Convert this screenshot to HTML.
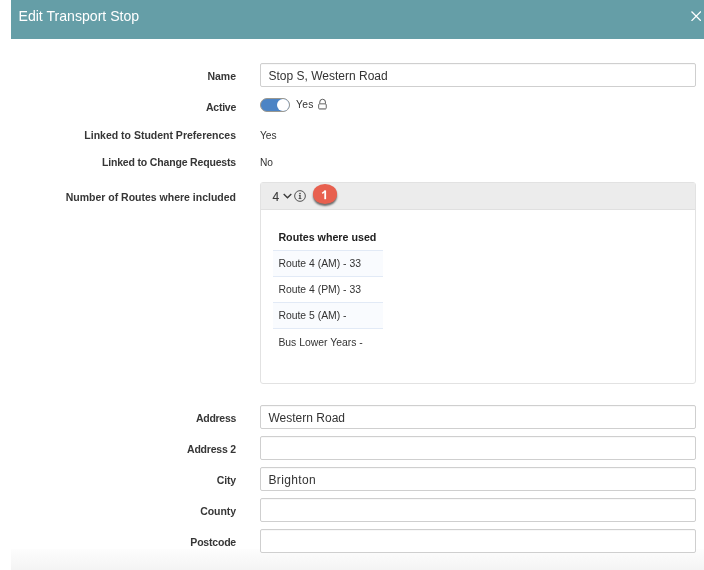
<!DOCTYPE html>
<html><head><meta charset="utf-8">
<style>
*{box-sizing:border-box;margin:0;padding:0}
html,body{width:704px;height:570px;overflow:hidden;background:#fff;font-family:"Liberation Sans",sans-serif;color:#333}
.modal{position:absolute;left:11px;top:0;width:693px;height:570px;background:#fff;will-change:transform}
.hdr{position:absolute;left:0;top:0;width:693px;height:39px;background:#659ea7}
.title{position:absolute;left:7.5px;top:8.2px;font-size:14.1px;color:#fff;line-height:16px}
.close{position:absolute;left:679.6px;top:10.6px;width:10.4px;height:10.4px}
.foot{position:absolute;left:0;top:549px;width:693px;height:21px;background:linear-gradient(#fdfdfd,#f4f4f4)}
.lbl{position:absolute;right:468px;font-size:10.5px;font-weight:bold;color:#363636;white-space:nowrap;line-height:12px}
.val{position:absolute;left:249px;font-size:10.2px;color:#333;white-space:nowrap;line-height:12px}
.inp{position:absolute;left:249px;width:436px;height:24px;border:1px solid #cfcfcf;border-radius:2px;background:#fff;font-size:12px;color:#333;padding-left:7.5px;padding-top:1px;line-height:22px;box-shadow:inset 0 1px 1px rgba(0,0,0,0.03)}
.panel{position:absolute;left:249px;top:182px;width:436px;height:202px;border:1px solid #e2e2e2;border-radius:3px;background:#fff}
.ph{position:absolute;left:0;top:0;width:434px;height:27px;background:#ececec;border-bottom:1px solid #e0e0e0}
table{position:absolute;left:12px;top:44px;border-collapse:collapse;font-size:10.2px;color:#333}
.tog{position:absolute;left:249px;top:98px;width:30px;height:14px;border-radius:7px;background:#4c84c5;border:1px solid #9a9890}
.knob{position:absolute;right:0px;top:0px;width:12px;height:12px;border-radius:50%;background:#fff}
.lock{position:absolute;left:306px;top:98px;width:11px;height:13px}
.cnt{position:absolute;left:11.5px;top:6.5px;font-size:12px;line-height:14px;color:#3a3a3a;-webkit-text-stroke:0.15px #3a3a3a}
.chev{position:absolute;left:21.5px;top:10.2px;width:9px;height:6px}
.info{position:absolute;left:33.3px;top:7px;width:12px;height:12px}
.badge{position:absolute;left:51.75px;top:0.5px;width:24.5px;height:20px;border-radius:50%;background:#e8604f;box-shadow:0 2px 2px rgba(0,0,0,0.55)}.badge svg{position:absolute;left:0;top:0}
td{padding:0 0 0 5.4px;height:26px;width:110px;white-space:nowrap;font-size:10.4px}
tr.th td{font-weight:bold;font-size:10.7px;color:#222;height:23px;vertical-align:top;padding-top:4px}
tr.r1 td{background:#f9fbfe;border-top:1px solid #e2eaf6}
tr.r2 td{border-top:1px solid #e2eaf6}
tr.last td{border-top:1px solid #e2eaf6}
</style></head><body>
<div class="modal">
  <div class="hdr">
    <div class="title">Edit Transport Stop</div>
    <svg class="close" viewBox="0 0 10.4 10.4"><path d="M0.5 0.5L9.9 9.9M9.9 0.5L0.5 9.9" stroke="#fff" stroke-width="1.25"/></svg>
  </div>

  <div class="foot"></div>
  <div class="lbl" style="top:69.5px">Name</div>
  <div class="inp" style="top:63px">Stop S, Western Road</div>

  <div class="lbl" style="top:100.5px;letter-spacing:-0.26px">Active</div>
  <div class="tog"><div class="knob"></div></div>
  <div class="val" style="left:285px;top:98.5px;font-size:10.3px;letter-spacing:0.25px">Yes</div>
  <svg class="lock" viewBox="0 0 11 13"><path d="M2.75 5.6V4.1A2.85 2.85 0 0 1 8.45 4.1V5.6" fill="none" stroke="#4a4a4a" stroke-width="0.9"/><rect x="1.65" y="5.85" width="7.6" height="5.1" rx="1" fill="none" stroke="#555" stroke-width="0.9"/><path d="M1.9 10.8H9" stroke="#999" stroke-width="1"/></svg>

  <div class="lbl" style="top:129px">Linked to Student Preferences</div>
  <div class="val" style="top:130px">Yes</div>
  <div class="lbl" style="top:156px;letter-spacing:-0.17px">Linked to Change Requests</div>
  <div class="val" style="top:157.3px">No</div>
  <div class="lbl" style="top:191px">Number of Routes where included</div>

  <div class="panel">
    <div class="ph">
      <div class="cnt">4</div>
      <svg class="chev" viewBox="0 0 9 6"><path d="M0.7 0.9L4.5 4.7L8.3 0.9" fill="none" stroke="#3a3a3a" stroke-width="1.35"/></svg>
      <svg class="info" viewBox="0 0 12 12"><circle cx="6" cy="6" r="5.35" fill="none" stroke="#4a4a4a" stroke-width="0.95"/><circle cx="6" cy="3.5" r="0.75" fill="#333"/><path d="M6 5.1V8.6" stroke="#333" stroke-width="1.1"/><path d="M4.9 5.35H6.3M4.6 8.55H7.4" stroke="#333" stroke-width="0.8"/></svg>
      <div class="badge"><svg width="24" height="20" viewBox="0 0 24 20"><path d="M12.2 15.2V6.5" stroke="#fff" stroke-width="1.8"/><path d="M12.5 6.9L9.2 9.4" stroke="#fff" stroke-width="1.4"/></svg></div>
    </div>
    <table>
      <tr class="th"><td>Routes where used</td></tr>
      <tr class="r1"><td>Route 4 (AM) - 33</td></tr>
      <tr class="r2"><td>Route 4 (PM) - 33</td></tr>
      <tr class="r1"><td>Route 5 (AM) -</td></tr>
      <tr class="r2 last"><td style="padding-top:1.5px">Bus Lower Years -</td></tr>
    </table>
  </div>

  <div class="lbl" style="top:412px;letter-spacing:-0.3px">Address</div>
  <div class="inp" style="top:405px">Western Road</div>
  <div class="lbl" style="top:443px;letter-spacing:-0.2px">Address 2</div>
  <div class="inp" style="top:436px"></div>
  <div class="lbl" style="top:474px;letter-spacing:-0.15px">City</div>
  <div class="inp" style="top:467px;letter-spacing:0.35px">Brighton</div>
  <div class="lbl" style="top:505px;letter-spacing:-0.05px">County</div>
  <div class="inp" style="top:498px"></div>
  <div class="lbl" style="top:536px;letter-spacing:-0.2px">Postcode</div>
  <div class="inp" style="top:529px"></div>

</div>
</body></html>
